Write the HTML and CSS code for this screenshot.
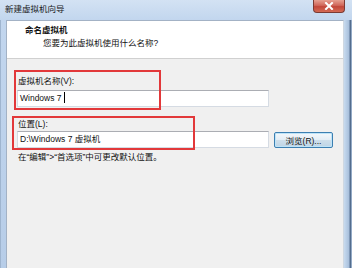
FILE: index.html
```html
<!DOCTYPE html>
<html lang="zh-CN">
<head>
    <meta charset="UTF-8">
    <title>新建虚拟机向导</title>
    <link rel="stylesheet" href="styles.css">
</head>
<body>
    <div class="window">
        <div class="titlebar">
            <span class="titlebar-text">新建虚拟机向导</span>
            <button class="close-btn">
                <svg width="10" height="8" viewBox="0 0 10 8">
                    <path d="M2 1 L8 7 M8 1 L2 7" stroke="#fff" stroke-width="2" stroke-linecap="square"/>
                </svg>
            </button>
        </div>
        <div class="window-main">
            <div class="frame frame-left"></div>
            <div class="content">
                <div class="header">
                    <div class="header-title">命名虚拟机</div>
                    <div class="header-sub">您要为此虚拟机使用什么名称?</div>
                </div>
                <div class="wizard-body">
                    <div class="field-label">虚拟机名称(V):</div>
                    <div class="field-row">
                        <div class="textbox">Windows 7 <span class="caret"></span></div>
                    </div>
                    <div class="field-label field-label-second">位置(L):</div>
                    <div class="field-row">
                        <div class="textbox">D:\Windows 7 虚拟机</div>
                        <button class="btn">浏览(R)...</button>
                    </div>
                    <div class="hint">在“编辑”&gt;“首选项”中可更改默认位置。</div>

                    <!-- annotation boxes over the screenshot -->
                    <div class="mark mark-name"></div>
                    <div class="mark mark-location"></div>
                </div>
            </div>
            <div class="frame frame-right"></div>
        </div>
    </div>
</body>
</html>
```

FILE: styles.css
```css
body {
    margin: 0;
    width: 352px;
    height: 268px;
    overflow: hidden;
    font-family: 'Liberation Sans', 'Noto Sans CJK SC', sans-serif;
    font-size: 8.5px;
    color: #111;
    background: #6d87a6;
}

.window {
    display: flex;
    flex-direction: column;
    height: 268px;
}

.titlebar {
    height: 20px;
    display: flex;
    align-items: flex-start;
    justify-content: space-between;
    background: linear-gradient(to bottom, #d3e2f3, #c2d6ee);
}

.titlebar-text {
    padding: 3px 0 0 5px;
    line-height: 12px;
    color: #1a1a1a;
}

.close-btn {
    width: 32px;
    height: 13px;
    margin-right: 7px;
    padding: 0;
    border: 1px solid #7b3a32;
    border-top: none;
    border-radius: 0 0 4px 4px;
    background: linear-gradient(to bottom, #e6a091, #d0675a 45%, #c2473a 55%, #d46a54);
    display: flex;
    align-items: center;
    justify-content: center;
}

.window-main {
    flex: 1;
    display: flex;
}

.frame {
    background: linear-gradient(to bottom, #c2d6ee, #b7cde8);
}

.frame-left {
    width: 6px;
    box-shadow: inset 1px 0 0 #9fb5cf;
}

.frame-right {
    width: 8px;
    background: linear-gradient(to right, #c8dbef, #a9c0dc 60%, #4d6788 80%, #b3c8e2);
}

.content {
    flex: 1;
    display: flex;
    flex-direction: column;
    background: #f0f0f0;
    border-left: 1px solid #a3b2c5;
    border-right: 1px solid #cfd8e2;
    border-top: 1px solid #a3b2c5;
}

.header {
    height: 37px;
    background: #fff;
    border-bottom: 1px solid #d0d0d0;
}

.header-title {
    font-weight: bold;
    line-height: 12px;
    padding: 3px 0 0 18px;
}

.header-sub {
    line-height: 12px;
    padding: 1px 0 0 36px;
}

.wizard-body {
    position: relative;
    flex: 1;
    padding: 16px 0 0 10px;
}

.field-label {
    line-height: 12px;
    padding-left: 1px;
    margin-bottom: 3px;
}

.field-label-second {
    margin-top: 11px;
    margin-bottom: 1px;
}

.field-row {
    display: flex;
    align-items: center;
    gap: 5px;
}

.textbox {
    width: 248px;
    height: 15px;
    line-height: 15px;
    padding-left: 2px;
    background: #fff;
    border: 1px solid #d5dbe3;
    border-top-color: #abadb3;
    white-space: nowrap;
}

.caret {
    display: inline-block;
    width: 1px;
    height: 11px;
    background: #000;
    vertical-align: -2px;
}

.btn {
    width: 59px;
    height: 16px;
    padding: 0;
    font-family: inherit;
    font-size: 8.5px;
    color: #111;
    border: 1px solid #3c7fb1;
    border-radius: 2px;
    background: linear-gradient(to bottom, #f4f8fb, #e3edf5 50%, #cfdfeb 50%, #bed5e6);
    box-shadow: inset 0 0 0 1px #bfe4f8;
}

.hint {
    margin-top: 3px;
    line-height: 12px;
    padding-left: 1px;
}

.mark {
    position: absolute;
    border: 2px solid #e2383a;
}

.mark-name {
    left: 7px;
    top: 11px;
    width: 143px;
    height: 36px;
}

.mark-location {
    left: 5px;
    top: 57px;
    width: 179px;
    height: 30px;
}
```
